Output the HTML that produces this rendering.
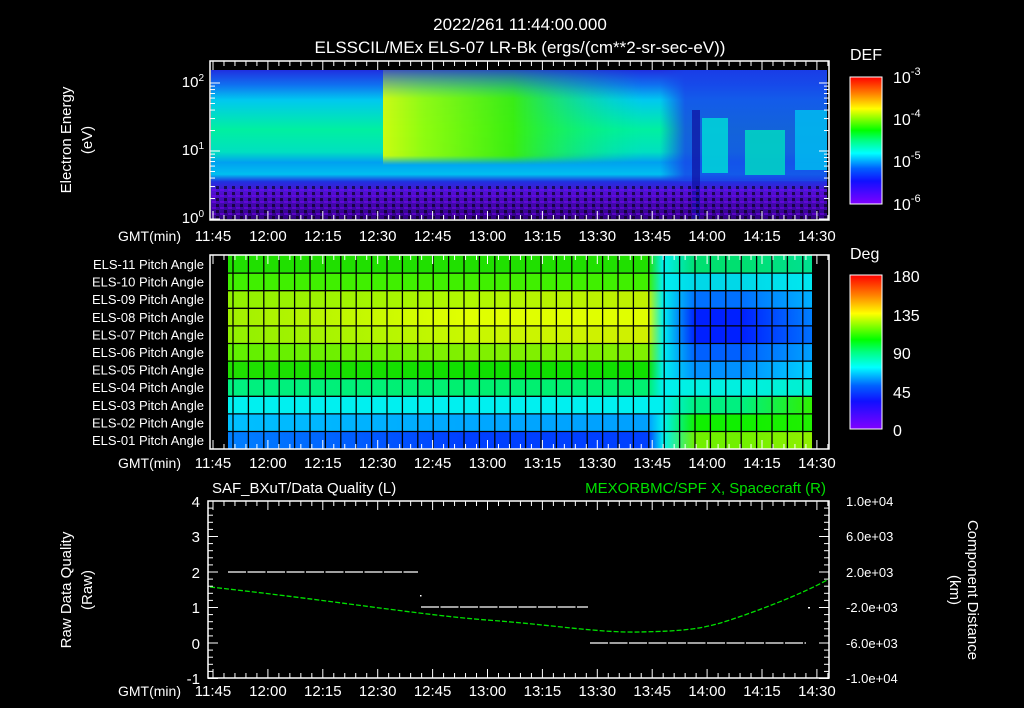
<!DOCTYPE html>
<html><head><meta charset="utf-8"><style>
html,body{margin:0;padding:0;background:#000;}
svg{display:block;font-size:14px}
text{font-family:"Liberation Sans",sans-serif;fill:#fff}
</style></head><body>
<svg id="s" width="1024" height="708" viewBox="0 0 1024 708" xmlns="http://www.w3.org/2000/svg">
<defs>
<linearGradient id="cb" x1="0" y1="1" x2="0" y2="0">
<stop offset="0" stop-color="#8000ff"/><stop offset="0.18" stop-color="#1010ff"/><stop offset="0.28" stop-color="#0060ff"/><stop offset="0.4" stop-color="#00ffff"/><stop offset="0.5" stop-color="#00ff80"/><stop offset="0.58" stop-color="#00ff00"/><stop offset="0.75" stop-color="#ffff00"/><stop offset="0.87" stop-color="#ff8000"/><stop offset="1" stop-color="#ff0000"/>
</linearGradient>
<linearGradient id="tv" x1="0" y1="0" x2="0" y2="1">
<stop offset="0" stop-color="#2030e0"/><stop offset="0.1" stop-color="#1070f0"/><stop offset="0.2" stop-color="#00c8f0"/><stop offset="0.4" stop-color="#00f0a0"/><stop offset="0.55" stop-color="#00e0c0"/><stop offset="0.62" stop-color="#00a0f0"/><stop offset="0.7" stop-color="#00c0f0"/><stop offset="0.75" stop-color="#2030e0"/><stop offset="0.82" stop-color="#5010d0"/><stop offset="1" stop-color="#300080"/>
</linearGradient>
<linearGradient id="gy" x1="0" y1="0" x2="1" y2="0">
<stop offset="0" stop-color="#e0ff00"/><stop offset="0.15" stop-color="#a0ff00"/><stop offset="0.5" stop-color="#40f000"/><stop offset="1" stop-color="#00f080" stop-opacity="0"/>
</linearGradient>
<linearGradient id="gyv" x1="0" y1="0" x2="0" y2="1">
<stop offset="0" stop-color="#fff" stop-opacity="0.2"/><stop offset="0.3" stop-color="#fff" stop-opacity="1"/><stop offset="0.9" stop-color="#fff" stop-opacity="1"/><stop offset="1" stop-color="#fff" stop-opacity="0"/>
</linearGradient>
<mask id="gm"><rect x="383" y="70" width="260" height="95" fill="url(#gyv)"/></mask>
<linearGradient id="rb" x1="0" y1="0" x2="1" y2="0">
<stop offset="0" stop-color="#1840e8" stop-opacity="0"/><stop offset="0.15" stop-color="#1840e8" stop-opacity="0.8"/><stop offset="1" stop-color="#1840e8" stop-opacity="0.8"/>
</linearGradient>
<pattern id="nz" width="8" height="6" patternUnits="userSpaceOnUse"><rect width="3" height="3" fill="#000" opacity=".6"/><rect x="4" y="3" width="4" height="2" fill="#8000ff" opacity=".5"/></pattern>
</defs>

<text x="520" y="30" text-anchor="middle" font-size="17">2022/261 11:44:00.000</text>
<text x="520" y="53" text-anchor="middle" font-size="17">ELSSCIL/MEx ELS-07 LR-Bk  (ergs/(cm**2-sr-sec-eV))</text>

<!-- top spectrogram -->
<rect x="211" y="70" width="616" height="149" fill="url(#tv)"/>
<rect x="383" y="70" width="260" height="95" fill="url(#gy)" mask="url(#gm)" opacity="0.9"/>
<rect x="660" y="70" width="167" height="110" fill="url(#rb)"/>
<rect x="702" y="118" width="26" height="55" fill="#00d8d8" opacity="0.85"/>
<rect x="745" y="130" width="40" height="45" fill="#00e0c0" opacity="0.8"/>
<rect x="795" y="110" width="32" height="60" fill="#00c0f0" opacity="0.8"/>
<rect x="692" y="110" width="8" height="109" fill="#1010a0" opacity="0.7"/>
<rect x="211" y="185" width="616" height="34" fill="url(#nz)"/>
<rect x="210" y="61" width="619" height="159" fill="none" stroke="#fff" stroke-width="1.5"/>
<text x="204" y="87" text-anchor="end" font-size="15">10<tspan dy="-6" font-size="10">2</tspan></text>
<text x="204" y="155" text-anchor="end" font-size="15">10<tspan dy="-6" font-size="10">1</tspan></text>
<text x="204" y="223" text-anchor="end" font-size="15">10<tspan dy="-6" font-size="10">0</tspan></text>
<text transform="translate(71,140) rotate(-90)" text-anchor="middle" font-size="15">Electron Energy</text>
<text transform="translate(92,140) rotate(-90)" text-anchor="middle" font-size="15">(eV)</text>

<!-- DEF colorbar -->
<text x="850" y="60" font-size="16">DEF</text>
<rect x="850" y="77" width="32" height="127" fill="url(#cb)" stroke="#fff"/>
<text x="893" y="83" font-size="16">10<tspan dy="-8" font-size="11">-3</tspan></text>
<text x="893" y="125" font-size="16">10<tspan dy="-8" font-size="11">-4</tspan></text>
<text x="893" y="167" font-size="16">10<tspan dy="-8" font-size="11">-5</tspan></text>
<text x="893" y="210" font-size="16">10<tspan dy="-8" font-size="11">-6</tspan></text>

<!-- middle pitch angle -->
<g id="pa"></g>
<rect x="210" y="255" width="619" height="194" fill="none" stroke="#fff" stroke-width="1.5"/>
<text x="850" y="259" font-size="16">Deg</text>
<rect x="850" y="275" width="32" height="154" fill="url(#cb)" stroke="#fff"/>
<text x="893" y="282" font-size="16">180</text>
<text x="893" y="321" font-size="16">135</text>
<text x="893" y="359" font-size="16">90</text>
<text x="893" y="398" font-size="16">45</text>
<text x="893" y="436" font-size="16">0</text>

<!-- bottom -->
<text x="212" y="493" font-size="15">SAF_BXuT/Data Quality (L)</text>
<text x="826" y="493" text-anchor="end" font-size="15" style="fill:#00e000">MEXORBMC/SPF X, Spacecraft (R)</text>
<rect x="208" y="501" width="621" height="177" fill="none" stroke="#fff" stroke-width="1.5"/>
<path d="M210 587 C 330 600, 420 615, 487 620 S 600 633, 640 632 S 700 630, 730 620 S 800 595, 829 579" fill="none" stroke="#00e000" stroke-width="1.3" stroke-dasharray="5 2"/>
<g stroke="#fff" stroke-width="1.2" stroke-dasharray="18 1.5">
<line x1="228" y1="572" x2="418" y2="572"/>
<line x1="421" y1="607" x2="588" y2="607"/>
<line x1="590" y1="643" x2="806" y2="643"/>
</g>
<rect x="420" y="595" width="1.5" height="1.5" fill="#fff"/><rect x="808" y="607" width="2" height="1.5" fill="#fff"/>
<g font-size="15">
<text x="200" y="507" text-anchor="end">4</text><text x="200" y="542" text-anchor="end">3</text><text x="200" y="578" text-anchor="end">2</text><text x="200" y="613" text-anchor="end">1</text><text x="200" y="649" text-anchor="end">0</text><text x="200" y="684" text-anchor="end">-1</text>
</g>
<g font-size="13">
<text x="846" y="506">1.0e+04</text><text x="846" y="541">6.0e+03</text><text x="846" y="577">2.0e+03</text><text x="846" y="612">-2.0e+03</text><text x="846" y="648">-6.0e+03</text><text x="846" y="683">-1.0e+04</text>
</g>
<text transform="translate(71,590) rotate(-90)" text-anchor="middle" font-size="15">Raw Data Quality</text>
<text transform="translate(92,590) rotate(-90)" text-anchor="middle" font-size="15">(Raw)</text>
<text transform="translate(968,590) rotate(90)" text-anchor="middle" font-size="15">Component Distance</text>
<text transform="translate(950,590) rotate(90)" text-anchor="middle" font-size="15">(km)</text>
</svg>
<script>
var NS="http://www.w3.org/2000/svg",s=document.getElementById('s');
function el(t,a,p,txt){var e=document.createElementNS(NS,t);for(var k in a)e.setAttribute(k,a[k]);if(txt)e.textContent=txt;(p||s).appendChild(e);return e;}
var times=["11:45","12:00","12:15","12:30","12:45","13:00","13:15","13:30","13:45","14:00","14:15","14:30"];
var x0=213,dx=54.9;
function axis(yTop,yBot,ly){
 el('text',{x:118,y:ly,'font-size':14},null,'GMT(min)');
 for(var i=0;i<12;i++){el('text',{x:x0+i*dx,y:ly,'text-anchor':'middle','font-size':15},null,times[i]);}
 for(var m=-6;m<=168;m+=3){var x=x0+m*dx/15;if(x<211||x>828)continue;var L=(m%15==0)?9:5;
  el('line',{x1:x,x2:x,y1:yTop,y2:yTop+L,stroke:'#fff','stroke-width':1});
  el('line',{x1:x,x2:x,y1:yBot,y2:yBot-L,stroke:'#fff','stroke-width':1});}
}
axis(61,220,241);axis(255,449,468);axis(501,678,696);
for(var d=0;d<2;d++)for(var k=1;k<=10;k++){var y=219-(d+Math.log10(k))*68;if(y<62)continue;var L=(k==1||k==10)?10:5;
 el('line',{x1:210,x2:210+L,y1:y,y2:y,stroke:'#fff'});el('line',{x1:829,x2:829-L,y1:y,y2:y,stroke:'#fff'});}
for(var v=-1;v<=4.001;v+=0.2){var y=643-v*35.5;var L=(Math.abs(v-Math.round(v))<0.01)?10:5;
 el('line',{x1:208,x2:208+L,y1:y,y2:y,stroke:'#fff'});el('line',{x1:829,x2:829-L,y1:y,y2:y,stroke:'#fff'});}
var pa=document.getElementById('pa');
var rows=[
 ["#20e000","#20e000","#20e000","#00e070","#00e090"],
 ["#40f000","#40f000","#40f000","#00d8e8","#00e8f0"],
 ["#90f000","#b0f800","#c0f000","#0070ff","#00b0ff"],
 ["#a0f000","#e0ff00","#e0ff00","#0020ff","#0080ff"],
 ["#90f000","#c8f800","#d0f000","#0020ff","#0070ff"],
 ["#60f000","#80f000","#80f000","#0060ff","#00a0ff"],
 ["#20e000","#10e000","#10e000","#0090ff","#00d0ff"],
 ["#00f080","#00f070","#00f070","#00f0e0","#00f0d0"],
 ["#00f0f0","#00f0f0","#00f0f0","#00f080","#30f000"],
 ["#00c0ff","#00a8ff","#00a0ff","#10f000","#20f000"],
 ["#0080ff","#0040ff","#0040ff","#70f000","#90f000"]];
var defs=s.querySelector('defs');
for(var r=0;r<11;r++){var g=el('linearGradient',{id:'r'+r,x1:0,y1:0,x2:1,y2:0},defs);
 var c=rows[r];
 el('stop',{offset:0,'stop-color':c[0]},g);el('stop',{offset:0.4,'stop-color':c[1]},g);el('stop',{offset:0.72,'stop-color':c[2]},g);el('stop',{offset:0.745,'stop-color':'#00f0f0'},g);el('stop',{offset:0.8,'stop-color':c[3]},g);el('stop',{offset:0.88,'stop-color':c[3]},g);el('stop',{offset:1,'stop-color':c[4]},g);
 el('rect',{x:228,y:255.5+r*17.6,width:584,height:17.7,fill:'url(#r'+r+')'},pa);}
for(var r=1;r<11;r++)el('line',{x1:228,x2:812,y1:255.5+r*17.6,y2:255.5+r*17.6,stroke:'#000','stroke-width':1.3},pa);
for(var x=233;x<812;x+=15.4)el('line',{x1:x,x2:x,y1:256,y2:449,stroke:'#000','stroke-width':1.3},pa);
var names=["ELS-11","ELS-10","ELS-09","ELS-08","ELS-07","ELS-06","ELS-05","ELS-04","ELS-03","ELS-02","ELS-01"];
for(var r=0;r<11;r++)el('text',{x:204,y:269+r*17.6,'text-anchor':'end','font-size':13},null,names[r]+' Pitch Angle');
</script>
</body></html>
